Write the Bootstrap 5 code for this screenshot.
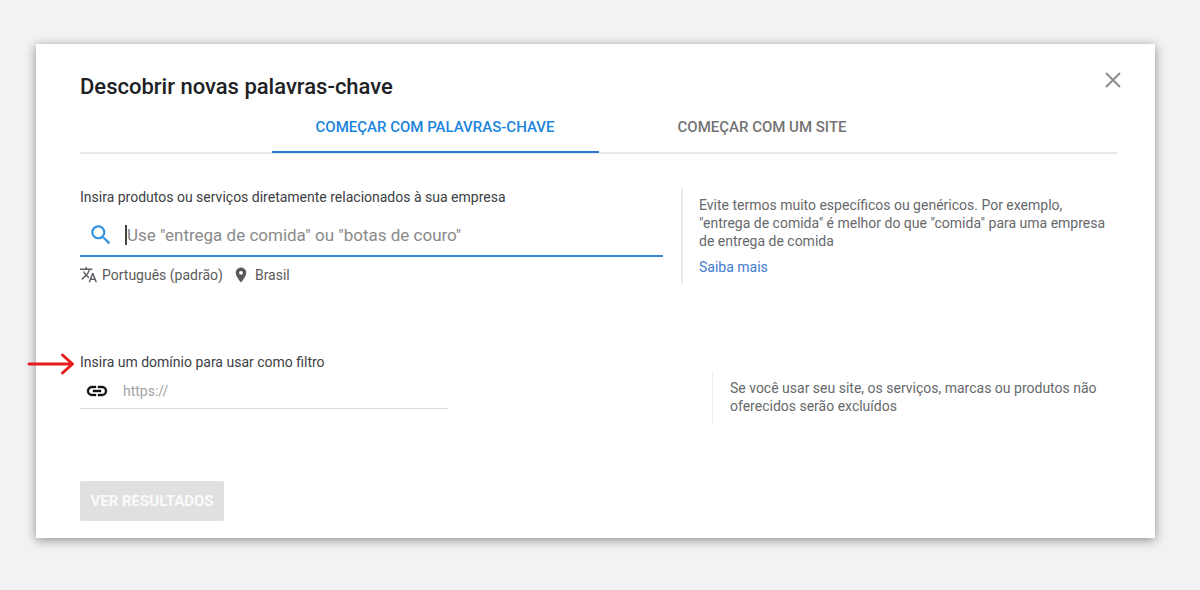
<!DOCTYPE html>
<html lang="pt-BR">
<head>
<meta charset="utf-8">
<meta name="viewport" content="width=device-width, initial-scale=1">
<title>Descobrir novas palavras-chave</title>
<link href="https://cdn.jsdelivr.net/npm/bootstrap@5.3.0/dist/css/bootstrap.min.css" rel="stylesheet">
<style>
  body { background: #f1f2f4; font-family: Roboto, "Liberation Sans", sans-serif; font-size: 14px; line-height: 18px; color: #444; }
  .page { padding: 44px 45px 52px 36px; }
  .planner { padding: 29px 38px 17px 44px; box-shadow: 0 2px 10px rgba(0, 0, 0, .42); }
  .planner-title { font-size: 22px; line-height: 28px; font-weight: 500; color: #202124; }
  .close-btn { width: 24px; height: 24px; color: #8a8d90; margin-top: -5px; margin-right: -8px; }
  .tabs { border-bottom: 2px solid #e8e9ea; }
  .tab-btn { width: 327px; height: 52px; margin-bottom: -1px; padding: 1px 0 0; font-size: 15px; font-weight: 500; line-height: 20px; color: #737373; border: 0; border-bottom: 2px solid transparent; background: none; }
  .tab-btn.active { color: #1a84dc; border-bottom-color: #2a7bd3; }
  .split { display: grid; column-gap: 18px; }
  .split-words { grid-template-columns: 583fr 436fr; margin-top: 34px; }
  .split-domain { grid-template-columns: 614fr 405fr; margin-top: 69px; }
  .field-label { color: #3c4043; }
  .field-words { height: 43px; margin-top: 8px; padding-left: 8px; border-bottom: 2px solid #3489d6; }
  .field-domain { width: 60%; height: 38px; border-bottom: 1px solid #dcdcdc; padding: 2px 0 0 5px; }
  .bare { min-width: 0; border: 0; outline: 0; background: none; padding: 0; color: #444; }
  .bare::placeholder { color: #8a8a8a; opacity: 1; }
  .bare-lg { font-size: 17px; caret-color: transparent; }
  .bare-sm { font-size: 14px; }
  .bare-sm::placeholder { color: #a3a3a3; }
  .link-gap { margin-right: 14px; }
  .search-gap { margin-right: 11px; }
  .caret { width: 2px; height: 20px; background: #444; }
  .targeting { gap: 5px; margin-top: 9px; color: #5b5b5b; }
  .hint { border-left: 2px solid #eaebec; padding: 8px 8px 8px 16px; line-height: 18px; color: #66696c; }
  .hint-domain { border-left-width: 1px; padding-left: 17px; margin-top: 18px; }
  .hint a { color: #3f7bd0; }
  .results-btn { width: 144px; height: 40px; padding: 0; margin-top: 58px; border: 0; border-radius: 2px; background: #e0e0e0; color: #fafafa; font-size: 15px; font-weight: 700; }
  .pointer { left: -53px; top: -1px; }
</style>
</head>
<body>
<main class="page">
  <section class="planner bg-white">
    <div class="d-flex justify-content-between align-items-start">
      <h1 class="planner-title mb-0">Descobrir novas palavras-chave</h1>
      <button type="button" class="close-btn btn p-0 border-0 d-flex align-items-center justify-content-center" aria-label="Fechar">
        <svg width="16" height="16" viewBox="0 0 16 16" fill="none" stroke="currentColor" stroke-width="2"><path d="M1 1l14 14M15 1L1 15"/></svg>
      </button>
    </div>
    <div class="tabs d-flex justify-content-center" role="tablist">
      <button type="button" class="tab-btn active" role="tab" aria-selected="true">COMEÇAR COM PALAVRAS-CHAVE</button>
      <button type="button" class="tab-btn" role="tab" aria-selected="false">COMEÇAR COM UM SITE</button>
    </div>

    <div class="split split-words">
      <div>
        <label class="field-label d-block" for="words">Insira produtos ou serviços diretamente relacionados à sua empresa</label>
        <div class="field-words d-flex align-items-center">
          <svg class="search-gap flex-shrink-0" width="26" height="26" viewBox="0 0 24 24" fill="#3291e0"><path d="M15.5 14h-.79l-.28-.27A6.47 6.47 0 0 0 16 9.5 6.5 6.5 0 1 0 9.5 16c1.61 0 3.09-.59 4.23-1.57l.27.28v.79l5 4.99L20.49 19l-4.99-5zm-6 0C7.01 14 5 11.99 5 9.5S7.01 5 9.5 5 14 7.01 14 9.5 11.99 14 9.5 14z"/></svg>
          <span class="caret flex-shrink-0"></span>
          <input id="words" class="bare bare-lg flex-grow-1" type="text" placeholder='Use "entrega de comida" ou "botas de couro"'>
        </div>
        <div class="targeting d-flex align-items-center">
          <svg width="17" height="18" viewBox="1 2 22 21" fill="#5f6368"><path d="M12.87 15.07l-2.54-2.51.03-.03A17.52 17.52 0 0 0 14.07 6H17V4h-7V2H8v2H1v2h11.17C11.5 7.92 10.44 9.75 9 11.35 8.07 10.32 7.3 9.19 6.69 8h-2c.73 1.63 1.73 3.17 2.98 4.56l-5.09 5.02L4 19l5-5 3.11 3.11.76-2.04zM18.5 10h-2L12 22h2l1.12-3h4.75L21 22h2l-4.5-12zm-2.62 7l1.62-4.33L19.12 17h-3.24z"/></svg>
          <span>Português (padrão)</span>
          <svg class="ms-1" width="18" height="18" viewBox="0 0 24 24" fill="#5a5a5a"><path d="M12 2C8.13 2 5 5.13 5 9c0 5.25 7 13 7 13s7-7.75 7-13c0-3.87-3.13-7-7-7zm0 9.500a2.500 2.500 0 0 1 0-5 2.500 2.500 0 0 1 0 5z"/></svg>
          <span>Brasil</span>
        </div>
      </div>
      <aside class="hint">
        <p class="mb-2">Evite termos muito específicos ou genéricos. Por exemplo, "entrega de comida" é melhor do que "comida" para uma empresa de entrega de comida</p>
        <a class="text-decoration-none" href="#">Saiba mais</a>
      </aside>
    </div>

    <div class="split split-domain">
      <div class="position-relative">
        <svg class="pointer position-absolute" width="48" height="24" viewBox="0 0 48 24" fill="none" stroke="#e81c1f" stroke-width="3" stroke-linecap="round" stroke-linejoin="round"><path d="M2 12h43M35.500 3L45.500 12l-10 9"/></svg>
        <label class="field-label d-block" for="domain">Insira um domínio para usar como filtro</label>
        <div class="field-domain d-flex align-items-center">
          <svg class="link-gap flex-shrink-0" width="24" height="24" viewBox="0 0 24 24" fill="#111" stroke="#111" stroke-width=".4"><path d="M3.900 12c0-1.710 1.390-3.100 3.100-3.100h4V7H7a5 5 0 0 0 0 10h4v-1.900H7c-1.710 0-3.100-1.390-3.100-3.100zM8 13h8v-2H8v2zm9-6h-4v1.900h4a3.100 3.100 0 0 1 0 6.200h-4V17h4a5 5 0 0 0 0-10z"/></svg>
          <input id="domain" class="bare bare-sm flex-grow-1" type="text" placeholder="https://">
        </div>
      </div>
      <aside class="hint hint-domain">Se você usar seu site, os serviços, marcas ou produtos não oferecidos serão excluídos</aside>
    </div>

    <button type="button" class="results-btn d-block">VER RESULTADOS</button>
  </section>
</main>
<script src="https://cdn.jsdelivr.net/npm/bootstrap@5.3.0/dist/js/bootstrap.bundle.min.js"></script>
</body>
</html>
